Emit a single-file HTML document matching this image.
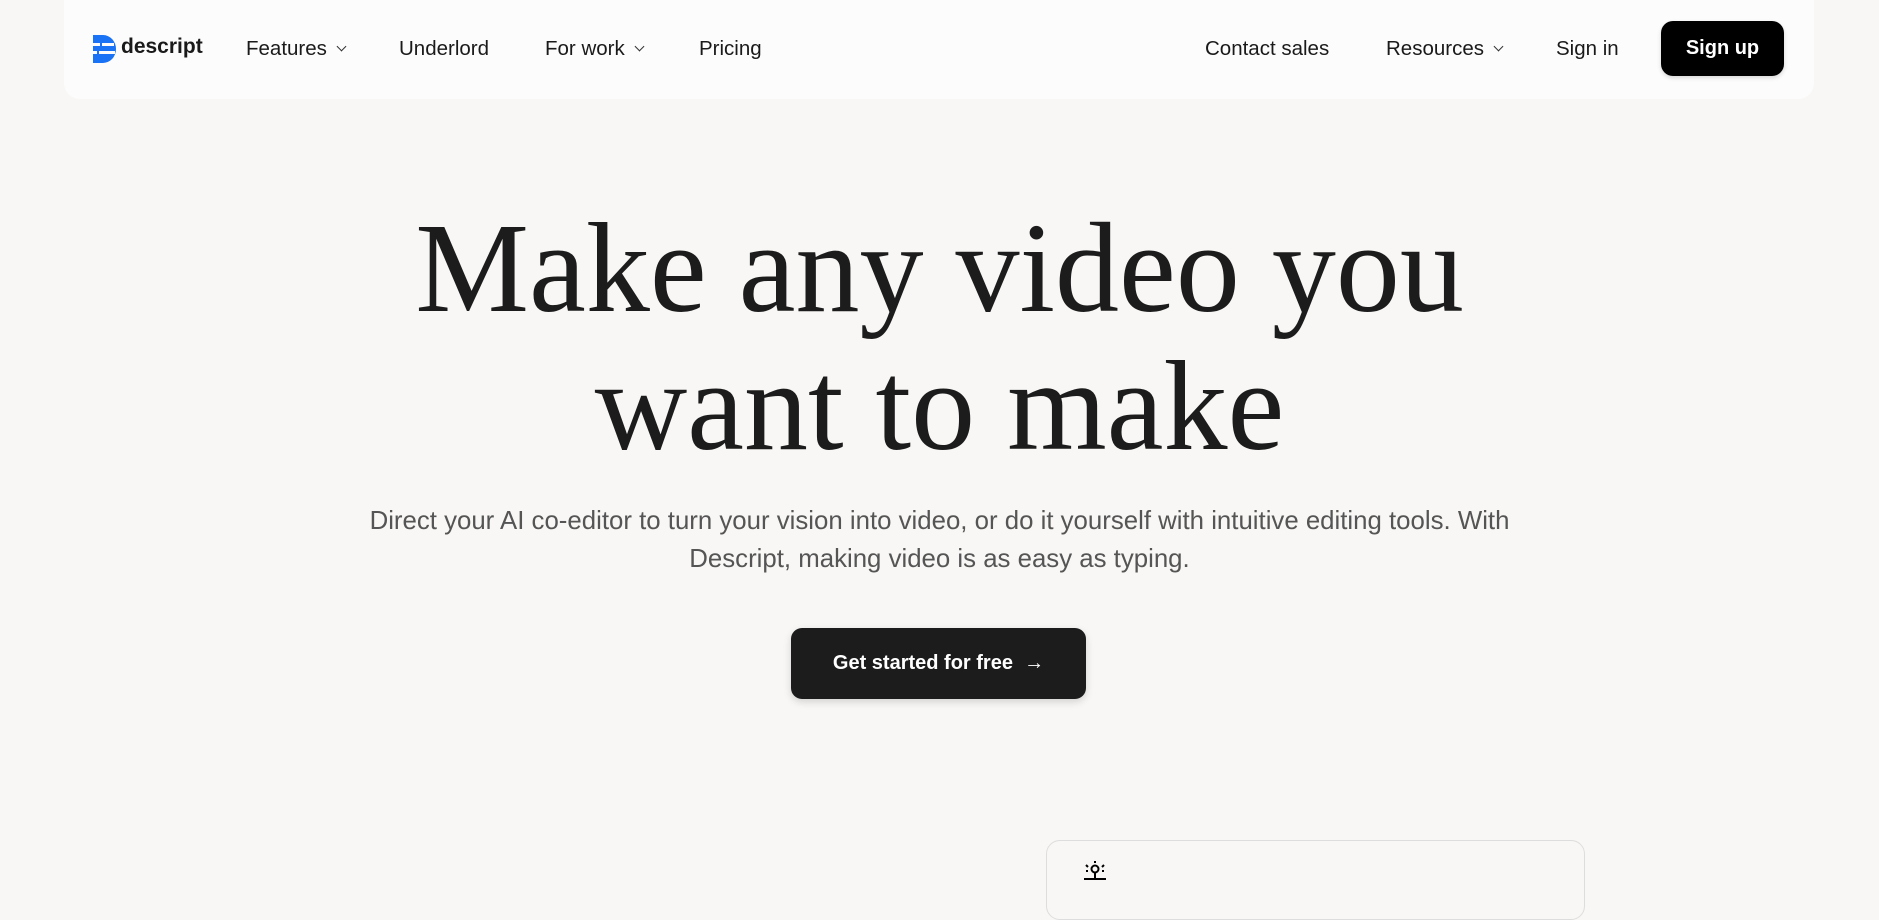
<!DOCTYPE html>
<html><head><meta charset="utf-8"><style>
*{margin:0;padding:0;box-sizing:border-box}
body{width:1879px;height:879px;overflow:hidden;background:#f8f7f5;font-family:"Liberation Sans",sans-serif;color:#1a1a1a;position:relative}
.nav{position:absolute;left:64px;top:0;width:1750px;height:99px;background:#fcfcfc;border-radius:0 0 16px 16px}
.ni{position:absolute;top:37px;font-size:20.5px;color:#1a1a1a;white-space:nowrap}
.chev{display:inline-block;width:7px;height:7px;border-right:1.5px solid #333;border-bottom:1.5px solid #333;transform:rotate(45deg);margin-left:11px;position:relative;top:-5px}
.signup{position:absolute;left:1661px;top:21px;width:123px;height:55px;background:#000;color:#fff;border-radius:12px;font-size:20px;font-weight:bold;display:flex;align-items:center;justify-content:center;box-shadow:0 2px 4px rgba(0,0,0,.15)}
h1{position:absolute;left:0;width:1879px;top:199px;text-align:center;font-family:"Liberation Serif",serif;font-weight:normal;font-size:128px;line-height:138px;color:#1c1c1c;letter-spacing:0}
p{position:absolute;left:0;width:1879px;top:502px;text-align:center;font-size:25.8px;line-height:38px;color:#555}
.cta{position:absolute;left:791px;top:628px;width:295px;height:71px;background:#1c1c1c;color:#fff;border-radius:11px;font-size:20px;font-weight:bold;display:flex;align-items:center;justify-content:center;box-shadow:0 3px 8px rgba(0,0,0,.15)}
.card{position:absolute;left:1046px;top:840px;width:539px;height:80px;border:1px solid #ddd;border-radius:14px;background:#f8f7f5}
</style></head><body>
<div class="nav"></div>
<svg style="position:absolute;left:93px;top:35px" width="24" height="28" viewBox="0 0 24 28"><path d="M0 0H10A13 14 0 0 1 10 28H0Z" fill="#1a73f5"/><rect x="0" y="8" width="7" height="3" fill="#fcfcfc"/><rect x="9" y="8" width="12" height="3" fill="#fcfcfc"/><rect x="0" y="16" width="4" height="3" fill="#fcfcfc"/><rect x="6" y="16" width="16" height="3" fill="#fcfcfc"/></svg>
<div class="ni" style="left:121px;top:35px;font-weight:bold;font-size:21px">descript</div>
<div class="ni" style="left:246px">Features<span class="chev"></span></div>
<div class="ni" style="left:399px">Underlord</div>
<div class="ni" style="left:545px">For work<span class="chev"></span></div>
<div class="ni" style="left:699px">Pricing</div>
<div class="ni" style="left:1205px">Contact sales</div>
<div class="ni" style="left:1386px">Resources<span class="chev"></span></div>
<div class="ni" style="left:1556px">Sign in</div>
<div class="signup">Sign up</div>
<h1>Make any video you<br>want to make</h1>
<p>Direct your AI co-editor to turn your vision into video, or do it yourself with intuitive editing tools. With<br>Descript, making video is as easy as typing.</p>
<div class="cta">Get started for free&nbsp;&nbsp;→</div>
<div class="card"><svg style="position:absolute;left:34px;top:20px" width="28" height="20" viewBox="0 0 28 20"><circle cx="14" cy="8" r="3.5" fill="none" stroke="#000" stroke-width="2"/><path d="M14 12V17M3 18H25M5 4l2 2M23 4l-2 2M5 10h2M21 10h2M14 0v2" stroke="#000" stroke-width="2"/></svg></div>
</body></html>
